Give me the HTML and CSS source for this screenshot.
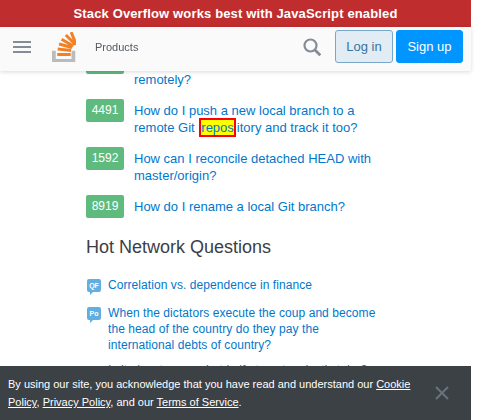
FILE: index.html
```html
<!DOCTYPE html>
<html lang="en">
<head>
  <meta charset="UTF-8" />
  <title>Stack Overflow</title>
  <link rel="stylesheet" href="styles.css">
</head>
<body>

  <div class="top">
    <div class="notice">Stack Overflow works best with JavaScript enabled</div>
    <header class="bar">
      <div class="burger"><span></span><span></span><span></span></div>
      <svg class="logo" width="24" height="30" viewBox="0 0 32 40">
        <path d="M26 36v-11h5v15H0V25h5v11z" fill="#bcbbbb"/>
        <path d="M7 32h18v-4H7zM7.400 24.800l17.800 1.900.4-4-17.800-1.900zM8.900 17.900l17.300 4.600 1-3.800-17.300-4.600zM11.800 11.400l15.500 9 2-3.400-15.500-9zM17 5.300l12.700 12.700 2.800-2.800L19.800 2.500zM23.700.9l6.800 16.600 3.700-1.500L27.400-.6z" fill="#f48024"/>
      </svg>
      <a class="products" href="#">Products</a>
      <svg class="search" width="18" height="18" viewBox="0 0 18 18">
        <circle cx="7.500" cy="7.500" r="6" fill="none" stroke="#848d95" stroke-width="2.200"/>
        <path d="M12 12l5.300 5.300" stroke="#848d95" stroke-width="2.800" fill="none"/>
      </svg>
      <a class="btn login" href="#">Log in</a>
      <a class="btn signup" href="#">Sign up</a>
    </header>
  </div>

  <main class="content">
    <ul class="linked">
      <li>
        <span class="score">3271</span>
        <a href="#">How do I delete a Git branch both locally and remotely?</a>
      </li>
      <li>
        <span class="score">4491</span>
        <a href="#">How do I push a new local branch to a remote Git <span class="mark">repos</span>itory and track it too?</a>
      </li>
      <li>
        <span class="score">1592</span>
        <a href="#">How can I reconcile detached HEAD with master/origin?</a>
      </li>
      <li>
        <span class="score">8919</span>
        <a href="#">How do I rename a local Git branch?</a>
      </li>
    </ul>

    <h2>Hot Network Questions</h2>

    <ul class="hot">
      <li>
        <span class="site"><svg width="14" height="17" viewBox="0 0 14 17"><path d="M2 0h10a2 2 0 0 1 2 2v9a2 2 0 0 1-2 2H6l-3 3v-3H2a2 2 0 0 1-2-2V2a2 2 0 0 1 2-2z" fill="#62aee1"/></svg><b>QF</b></span>
        <a href="#">Correlation vs. dependence in finance</a>
      </li>
      <li>
        <span class="site"><svg width="14" height="17" viewBox="0 0 14 17"><path d="M2 0h10a2 2 0 0 1 2 2v9a2 2 0 0 1-2 2H6l-3 3v-3H2a2 2 0 0 1-2-2V2a2 2 0 0 1 2-2z" fill="#62aee1"/></svg><b>Po</b></span>
        <a href="#">When the dictators execute the coup and become the head of the country do they pay the international debts of country?</a>
      </li>
      <li>
        <span class="site"><svg width="14" height="17" viewBox="0 0 14 17"><path d="M2 0h10a2 2 0 0 1 2 2v9a2 2 0 0 1-2 2H6l-3 3v-3H2a2 2 0 0 1-2-2V2a2 2 0 0 1 2-2z" fill="#62aee1"/></svg><b>El</b></span>
        <a href="#">Is it okay to use a hot knife to cut a plastic tube?</a>
      </li>
    </ul>
  </main>

  <div class="cookie">
    <p>By using our site, you acknowledge that you have read and understand our <a href="#">Cookie Policy</a>, <a href="#">Privacy Policy</a>, and our <a href="#">Terms of Service</a>.</p>
    <svg class="close" width="14" height="14" viewBox="0 0 14 14">
      <path d="M1 1l12 12M13 1L1 13" stroke="#6a737c" stroke-width="2" fill="none"/>
    </svg>
  </div>

</body>
</html>
```

FILE: styles.css
```css
html, body {
  margin: 0;
  height: 420px;
  overflow: hidden;
}
body {
  background: #fff;
  color: #3b4045;
  font-family: 'Liberation Sans', Arial, sans-serif;
  font-size: 13px;
}
a {
  color: #0077cc;
  text-decoration: none;
}
ul {
  list-style: none;
  margin: 0;
  padding: 0;
}

.top {
  position: fixed;
  top: 0;
  left: 0;
  width: 471px;
  z-index: 5;
}
.notice {
  background: #c02d2e;
  color: #fff;
  height: 27px;
  line-height: 27px;
  text-align: center;
  font-size: 13px;
  font-weight: bold;
  letter-spacing: 0.14px;
}
.bar {
  display: flex;
  align-items: center;
  height: 44px;
  background: #fafafb;
  box-shadow: 0 1px 4px rgba(0, 0, 0, 0.15);
}
.burger {
  display: flex;
  flex-direction: column;
  gap: 3px;
  margin-left: 13px;
  margin-top: -4px;
  width: 18px;
}
.burger span {
  height: 2px;
  background: #848d95;
}
.logo {
  margin-left: 21px;
  margin-top: -4px;
}
.products {
  margin-left: 19px;
  color: #535a60;
  font-size: 11px;
  margin-top: -4px;
}
.search {
  margin-left: auto;
  margin-right: 14px;
  margin-top: -4px;
}
.btn {
  display: block;
  box-sizing: border-box;
  height: 33px;
  line-height: 31px;
  border-radius: 3px;
  border: 1px solid;
  text-align: center;
  font-size: 13px;
  margin-top: -5px;
}
.login {
  width: 58px;
  background: #e1ecf4;
  border-color: #7aa7c7;
  color: #39739d;
  margin-right: 3px;
}
.signup {
  width: 67px;
  background: #0095ff;
  border-color: #0095ff;
  color: #fff;
  margin-right: 8px;
}

.content {
  padding: 51px 0 0 86px;
}
.linked {
  width: 311px;
}
.linked li {
  display: flex;
  gap: 10px;
  margin-bottom: 11px;
}
.linked a {
  padding-top: 3px;
  font-size: 13px;
  line-height: 17px;
}
.hot {
  width: 294px;
}
.hot a {
  font-size: 12px;
  line-height: 16px;
  letter-spacing: 0.07px;
}
.score {
  flex: none;
  width: 38px;
  height: 23px;
  line-height: 23px;
  background: #5eba7d;
  color: #fff;
  border-radius: 2px;
  text-align: center;
  font-size: 12px;
}
.mark {
  background: #ffff00;
  border: 2px solid #ff0000;
  margin: 0 1px;
}
h2 {
  margin: 18px 0 19px;
  font-size: 18px;
  line-height: 22px;
  font-weight: normal;
}
.hot li {
  display: flex;
  gap: 7px;
  margin-bottom: 9px;
}
.site {
  position: relative;
  flex: none;
  width: 14px;
  margin-left: 1px;
  padding-top: 2px;
}
.hot li:last-child .site {
  padding-top: 4px;
}
.site svg {
  display: block;
}
.site b {
  position: absolute;
  top: 5px;
  left: 0;
  width: 14px;
  text-align: center;
  color: #fff;
  font-size: 7px;
  font-weight: bold;
}

.cookie {
  position: fixed;
  left: 0;
  bottom: 0;
  box-sizing: border-box;
  width: 471px;
  height: 54px;
  background: #3c4146;
  color: #fff;
  display: flex;
  align-items: center;
  padding: 0 22px 0 8px;
  z-index: 6;
}
.cookie p {
  margin: 0;
  width: 405px;
  font-size: 11px;
  line-height: 18px;
}
.cookie a {
  color: #fff;
  text-decoration: underline;
}
.close {
  margin-left: auto;
}
```
